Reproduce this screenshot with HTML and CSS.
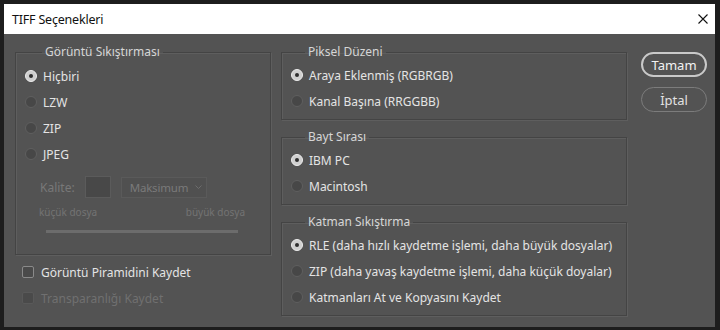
FILE: index.html
```html
<!DOCTYPE html>
<html lang="tr">
<head>
<meta charset="UTF-8">
<title>TIFF Seçenekleri</title>
<link rel="stylesheet" href="styles.css">
</head>
<body>
<div class="dialog">
  <div class="titlebar">
    <span class="title">TIFF Seçenekleri</span>
    <svg class="close" width="10" height="10" viewBox="0 0 10 10">
      <path d="M0.5 0.5 L9.5 9.5 M9.5 0.5 L0.5 9.5" stroke="#111" stroke-width="1.1" fill="none"/>
    </svg>
  </div>
  <div class="body">
    <div class="col-left">
      <fieldset class="group group-compress">
        <legend>Görüntü Sıkıştırması</legend>
        <div class="row"><span class="radio on"></span>Hiçbiri</div>
        <div class="row"><span class="radio"></span>LZW</div>
        <div class="row"><span class="radio"></span>ZIP</div>
        <div class="row"><span class="radio"></span>JPEG</div>
        <div class="quality">
          <span class="dim">Kalite:</span>
          <span class="swatch"></span>
          <span class="select">Maksimum
            <svg width="7" height="5" viewBox="0 0 7 5"><path d="M0.5 0.5 L3.5 3.5 L6.5 0.5" stroke="#6c6c6c" fill="none"/></svg>
          </span>
        </div>
        <div class="scale">
          <span>küçük dosya</span>
          <span>büyük dosya</span>
        </div>
        <div class="track"></div>
      </fieldset>
      <div class="row check-row first"><span class="check"></span>Görüntü Piramidini Kaydet</div>
      <div class="row check-row disabled"><span class="check"></span>Transparanlığı Kaydet</div>
    </div>

    <div class="col-mid">
      <fieldset class="group">
        <legend>Piksel Düzeni</legend>
        <div class="row"><span class="radio on"></span>Araya Eklenmiş (RGBRGB)</div>
        <div class="row"><span class="radio"></span>Kanal Başına (RRGGBB)</div>
      </fieldset>
      <fieldset class="group">
        <legend>Bayt Sırası</legend>
        <div class="row"><span class="radio on"></span>IBM PC</div>
        <div class="row"><span class="radio"></span>Macintosh</div>
      </fieldset>
      <fieldset class="group">
        <legend>Katman Sıkıştırma</legend>
        <div class="row"><span class="radio on"></span>RLE (daha hızlı kaydetme işlemi, daha büyük dosyalar)</div>
        <div class="row"><span class="radio"></span>ZIP (daha yavaş kaydetme işlemi, daha küçük doyalar)</div>
        <div class="row"><span class="radio"></span>Katmanları At ve Kopyasını Kaydet</div>
      </fieldset>
    </div>

    <div class="col-buttons">
      <button class="btn primary">Tamam</button>
      <button class="btn">İptal</button>
    </div>
  </div>
</div>
</body>
</html>
```

FILE: styles.css
```css
body {
  margin: 0;
  background-color: #1d1d1d;
  font-family: "Noto Sans", "Open Sans", sans-serif;
  font-size: 12px;
  color: #e4e4e4;
}

.dialog {
  width: 711px;
  height: 323px;
  margin: 4px 0 0 4px;
  background-color: #535353;
  display: flex;
  flex-direction: column;
}

.titlebar {
  height: 30px;
  background-color: #fff;
  display: flex;
  align-items: center;
  justify-content: space-between;
  padding: 0 7px 0 8px;
  flex-shrink: 0;
}

.title {
  color: #111;
  font-size: 12.5px;
  letter-spacing: -0.2px;
  margin-top: 1px;
}

.body {
  display: flex;
  padding: 10px 0 0 11px;
}

.col-left {
  width: 256px;
}

.col-mid {
  width: 346px;
  margin-left: 10px;
  display: flex;
  flex-direction: column;
  gap: 9px;
}

.col-buttons {
  margin-left: 14px;
  margin-top: 8px;
  display: flex;
  flex-direction: column;
  gap: 10px;
}

/* group boxes */
.group {
  margin: 0;
  padding: 2px 0 5px 9px;
  border: 1px solid #444;
  box-shadow: inset 1px 1px 0 #5e5e5e, 1px 1px 0 #5e5e5e;
  min-width: 0;
}

.group legend {
  margin-left: 17px;
  padding: 0 3px;
  line-height: 16px;
  color: #d6d6d6;
}

.col-mid .group legend {
  margin-left: 14px;
}

.group-compress {
  padding-top: 3px;
  padding-bottom: 21px;
}

.row {
  height: 26px;
  display: flex;
  align-items: center;
  white-space: nowrap;
}

/* radio buttons */
.radio {
  width: 12px;
  height: 12px;
  box-sizing: border-box;
  border-radius: 50%;
  border: 1px solid #5f5f5f;
  background-color: #474747;
  margin-right: 6px;
  flex-shrink: 0;
  display: flex;
  align-items: center;
  justify-content: center;
}

.radio.on {
  background-color: #cfcfcf;
  border-color: #ececec;
}

.radio.on::after {
  content: "";
  width: 4px;
  height: 4px;
  border-radius: 50%;
  background-color: #2e2e2e;
}

/* jpeg quality */
.quality {
  height: 22px;
  margin-top: 9px;
  padding-left: 15px;
  display: flex;
  align-items: center;
}

.dim {
  color: #787878;
}

.swatch {
  width: 24px;
  height: 20px;
  margin-left: 10px;
  border: 1px solid #5b5b5b;
  background-color: #484848;
}

.select {
  width: 86px;
  height: 21px;
  box-sizing: border-box;
  margin-left: 10px;
  border: 1px solid #5a5a5a;
  background-color: #505050;
  color: #7a7a7a;
  font-size: 11.5px;
  display: flex;
  align-items: center;
  gap: 4px;
  padding: 0 4px 0 8px;
  letter-spacing: -0.2px;
}

.select svg {
  margin-left: auto;
}

.scale {
  height: 14px;
  margin-top: 7px;
  padding-left: 14px;
  padding-right: 25px;
  display: flex;
  justify-content: space-between;
  font-size: 10px;
  color: #737373;
}

.track {
  height: 3px;
  margin: 11px 0 0 21px;
  width: 192px;
  background-color: #6c6c6c;
}

/* checkboxes */
.check-row {
  padding-left: 7px;
}

.check-row.first {
  margin-top: 4px;
}

.check {
  width: 12px;
  height: 12px;
  box-sizing: border-box;
  border: 1px solid #8a8a8a;
  border-radius: 2px;
  background-color: #4a4a4a;
  margin-right: 7px;
}

.disabled {
  color: #707070;
}

.disabled .check {
  border-color: #595959;
}

/* buttons */
.btn {
  width: 66px;
  height: 25px;
  border-radius: 13px;
  border: 1px solid #7c7c7c;
  background-color: #535353;
  color: #e2e2e2;
  font-family: "Noto Sans", "Open Sans", sans-serif;
  font-size: 13px;
  padding: 0;
  cursor: pointer;
}

.btn.primary {
  border: 2px solid #c9c9c9;
  color: #f2f2f2;
}
```
